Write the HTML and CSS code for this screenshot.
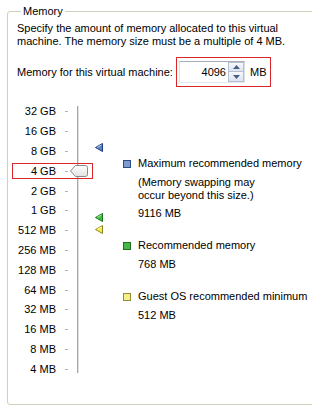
FILE: index.html
```html
<!DOCTYPE html>
<html lang="en">
<head>
    <meta charset="UTF-8">
    <title>Memory</title>
    <link rel="stylesheet" href="styles.css">
</head>
<body>
    <fieldset class="group">
        <legend>Memory</legend>
        <p class="intro">Specify the amount of memory allocated to this virtual<br>machine. The memory size must be a multiple of 4 MB.</p>

        <div class="mem-row">
            <label class="mem-label" for="mem-size">Memory for this virtual machine:</label>
            <div class="mem-box">
                <div class="spin">
                    <input id="mem-size" class="spin-input" type="text" value="4096">
                    <div class="spin-buttons">
                        <button class="spin-btn" tabindex="-1">
                            <svg width="7" height="4" viewBox="0 0 7 4"><polygon points="3.5,0 7,4 0,4" fill="#4a5f87"/></svg>
                        </button>
                        <button class="spin-btn" tabindex="-1">
                            <svg width="7" height="4" viewBox="0 0 7 4"><polygon points="0,0 7,0 3.5,4" fill="#4a5f87"/></svg>
                        </button>
                    </div>
                </div>
                <span class="unit">MB</span>
            </div>
        </div>

        <div class="slider">
            <div class="scale">
                <div class="track"></div>

                <span class="scale-label">32 GB</span><span class="tick"></span>
                <span class="scale-label">16 GB</span><span class="tick"></span>
                <span class="scale-label">8 GB</span><span class="tick"></span>
                <span class="scale-label">4 GB</span><span class="tick"></span>
                <span class="scale-label">2 GB</span><span class="tick"></span>
                <span class="scale-label">1 GB</span><span class="tick"></span>
                <span class="scale-label">512 MB</span><span class="tick"></span>
                <span class="scale-label">256 MB</span><span class="tick"></span>
                <span class="scale-label">128 MB</span><span class="tick"></span>
                <span class="scale-label">64 MB</span><span class="tick"></span>
                <span class="scale-label">32 MB</span><span class="tick"></span>
                <span class="scale-label">16 MB</span><span class="tick"></span>
                <span class="scale-label">8 MB</span><span class="tick"></span>
                <span class="scale-label">4 MB</span><span class="tick"></span>

                <!-- selected value highlight -->
                <div class="selected" style="top: 61px;"></div>

                <svg class="thumb" style="top: 63px;" width="18" height="12" viewBox="0 0 18 12">
                    <defs>
                        <linearGradient id="thumb-fill" x1="0" y1="0" x2="0" y2="1">
                            <stop offset="0" stop-color="#ffffff"/>
                            <stop offset="1" stop-color="#e2e2e2"/>
                        </linearGradient>
                    </defs>
                    <path d="M0.5 6 L5.5 0.5 H15.5 Q17.5 0.5 17.5 2.5 V9.5 Q17.5 11.5 15.5 11.5 H5.5 Z" fill="url(#thumb-fill)" stroke="#8a8a8a"/>
                </svg>

                <svg class="marker" style="top: 41px;" width="8" height="9" viewBox="0 0 8 9">
                    <polygon points="0.5,4.5 7.5,0.5 7.5,8.5" fill="#5d82c8" stroke="#1d3b78"/>
                    <polyline points="2,4.5 6.5,2" fill="none" stroke="#b8ccf0"/>
                </svg>
                <svg class="marker" style="top: 111px;" width="8" height="9" viewBox="0 0 8 9">
                    <polygon points="0.5,4.5 7.5,0.5 7.5,8.5" fill="#3fbf3f" stroke="#17731a"/>
                    <polyline points="2,4.5 6.5,2" fill="none" stroke="#a8eea8"/>
                </svg>
                <svg class="marker" style="top: 123px;" width="8" height="9" viewBox="0 0 8 9">
                    <polygon points="0.5,4.5 7.5,0.5 7.5,8.5" fill="#f3ec4a" stroke="#8c8420"/>
                    <polyline points="2,4.5 6.5,2" fill="none" stroke="#fffbc0"/>
                </svg>
            </div>

            <div class="legend">
                <div class="legend-item">
                    <div class="legend-title"><span class="swatch swatch-max"></span>Maximum recommended memory</div>
                    <div class="legend-note">(Memory swapping may<br>occur beyond this size.)</div>
                    <div class="legend-value">9116 MB</div>
                </div>
                <div class="legend-item">
                    <div class="legend-title"><span class="swatch swatch-rec"></span>Recommended memory</div>
                    <div class="legend-value">768 MB</div>
                </div>
                <div class="legend-item">
                    <div class="legend-title"><span class="swatch swatch-min"></span>Guest OS recommended minimum</div>
                    <div class="legend-value">512 MB</div>
                </div>
            </div>
        </div>
    </fieldset>
</body>
</html>
```

FILE: styles.css
```css
body {
    margin: 0;
    padding: 5px 5px 5px 7px;
    background-color: #fff;
    font-family: "Liberation Sans", Arial, sans-serif;
    font-size: 11px;
    line-height: 13px;
    color: #000;
}
.group {
    margin: 0;
    padding: 4px 9px 25px 9px;
    border: 1px solid #d0d0bf;
    border-radius: 3px;
}
.group legend {
    margin-left: 4px;
    padding: 0 2px;
}
.intro {
    margin: 0;
}
.mem-row {
    display: flex;
    align-items: center;
    margin-top: 9px;
}
.mem-label {
    width: 159px;
}
.mem-box {
    display: flex;
    align-items: center;
    padding: 3px 3px 3px 2px;
    border: 1px solid #d9262b;
}
.spin {
    display: flex;
    align-items: center;
    width: 66px;
    height: 22px;
    box-sizing: border-box;
    border: 1px solid;
    border-color: #abadb3 #dbdfe6 #e3e9ef #e2e3ea;
    background-color: #fff;
}
.spin-input {
    flex: 1;
    min-width: 0;
    padding: 0 2px 0 0;
    border: none;
    font: inherit;
    text-align: right;
    outline: none;
}
.spin-buttons {
    display: flex;
    flex-direction: column;
    width: 16px;
}
.spin-btn {
    display: flex;
    align-items: center;
    justify-content: center;
    height: 10px;
    padding: 0;
    border: 1px solid #b4bfd2;
    background: linear-gradient(#f6f8fc, #dde4f0);
}
.spin-btn + .spin-btn {
    border-top: none;
}
.unit {
    margin-left: 5px;
}
.slider {
    display: flex;
    margin-top: 15px;
}
.scale {
    position: relative;
    flex: none;
    display: grid;
    grid-template-columns: 39px 3px 2px;
    grid-auto-rows: 19.8px;
    column-gap: 9px;
    align-items: center;
}
.scale-label {
    grid-column: 1;
    text-align: right;
    white-space: nowrap;
}
.tick {
    grid-column: 2;
    height: 1px;
    background-color: #b4b4b4;
}
.track {
    grid-column: 3;
    grid-row: 1 / 15;
    align-self: stretch;
    margin: 4px 0 6px;
    border-left: 1px solid #a7a7a7;
    border-right: 1px solid #e2e2e2;
}
.selected {
    position: absolute;
    left: -5px;
    width: 81px;
    height: 16px;
    box-sizing: border-box;
    border: 1px solid #d9262b;
}
.thumb {
    position: absolute;
    left: 53px;
}
.marker {
    position: absolute;
    left: 78px;
}
.legend {
    flex: 1;
    margin-left: 44px;
    padding-top: 55px;
    white-space: nowrap;
}
.legend-item + .legend-item {
    margin-top: 19px;
}
.legend-title {
    display: flex;
    align-items: center;
}
.swatch {
    flex: none;
    width: 8px;
    height: 8px;
    box-sizing: border-box;
    margin-right: 7px;
    border: 1px solid;
}
.swatch-max {
    background-color: #7d9bd0;
    border-color: #2d4a85;
}
.swatch-rec {
    background-color: #47b847;
    border-color: #1c6e1c;
}
.swatch-min {
    background-color: #f4ef86;
    border-color: #8f8a3a;
}
.legend-note,
.legend-value {
    padding-left: 15px;
    margin-top: 6px;
}
.legend-note + .legend-value {
    margin-top: 5px;
}
```
